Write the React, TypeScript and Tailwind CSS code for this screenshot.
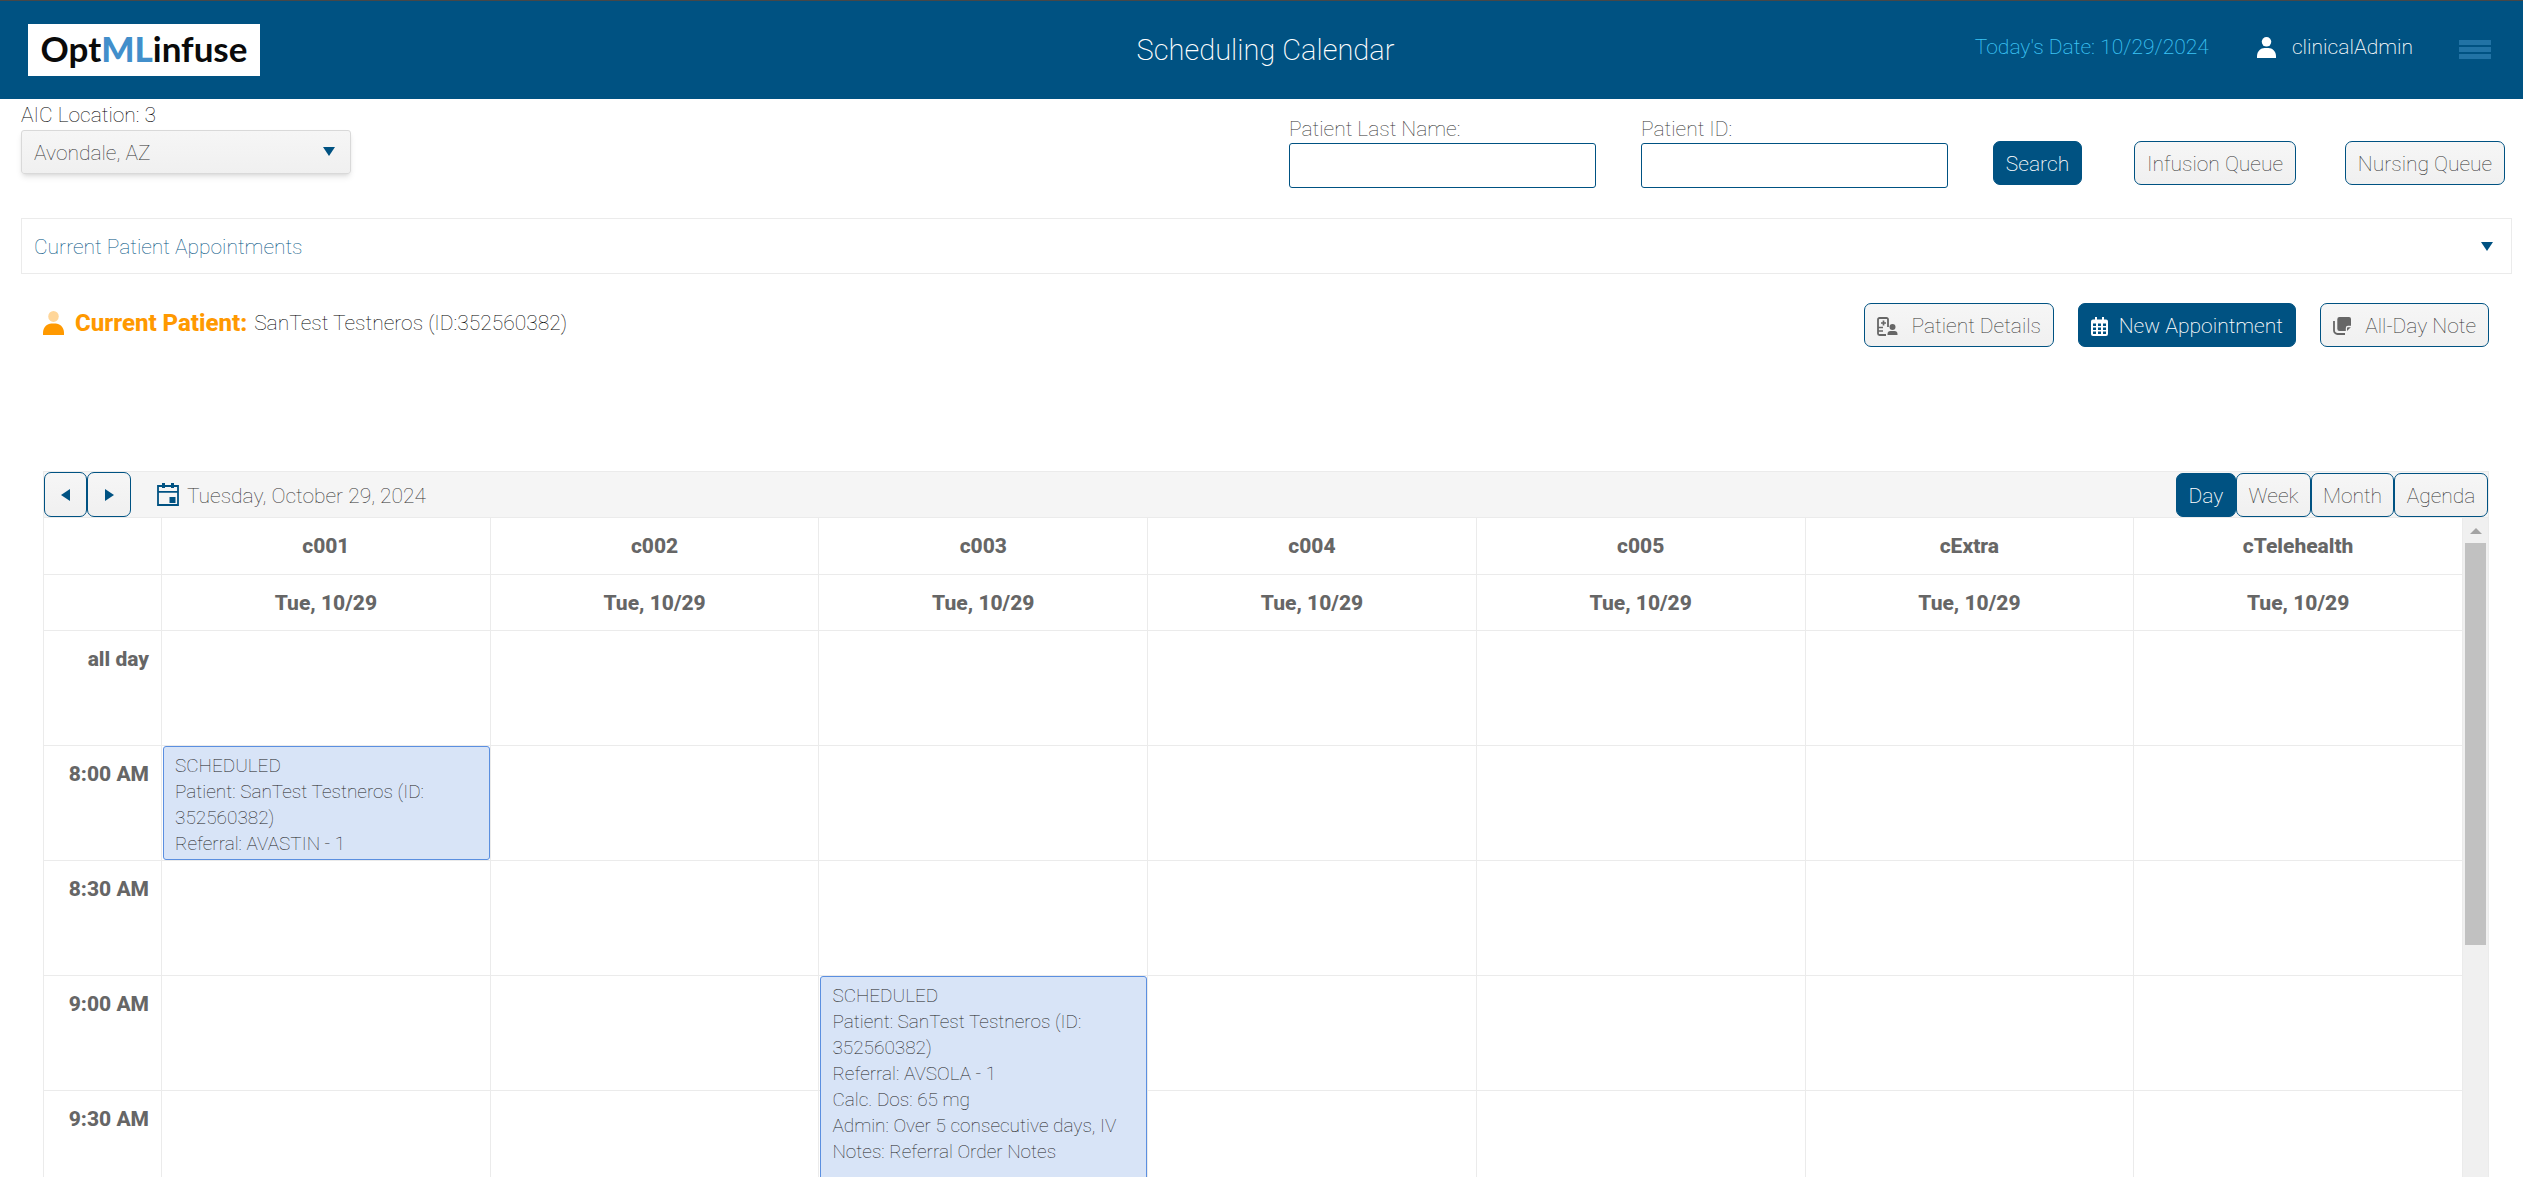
import React from "react";

const ROOMS = ["c001", "c002", "c003", "c004", "c005", "cExtra", "cTelehealth"];
const TIMES = ["8:00 AM", "8:30 AM", "9:00 AM", "9:30 AM"];

type Appointment = { room: string; time: string; lines: string[]; size: string };

const APPOINTMENTS: Appointment[] = [
  {
    room: "c001",
    time: "8:00 AM",
    size: "h-[114px]",
    lines: ["SCHEDULED", "Patient: SanTest Testneros (ID: 352560382)", "Referral: AVASTIN - 1"],
  },
  {
    room: "c003",
    time: "9:00 AM",
    size: "h-[229px]",
    lines: [
      "SCHEDULED",
      "Patient: SanTest Testneros (ID: 352560382)",
      "Referral: AVSOLA - 1",
      "Calc. Dos: 65 mg",
      "Admin: Over 5 consecutive days, IV",
      "Notes: Referral Order Notes",
    ],
  },
];

function UserIcon({ className, head }: { className: string; head?: string }) {
  return (
    <svg viewBox="0 0 20 22" className={className} preserveAspectRatio="none" aria-hidden="true">
      <ellipse cx="10" cy="5" rx="5" ry="5" fill={head ?? "currentColor"} />
      <path d="M0 22v-2c0-5 4-8.500 8-8.500h4c4 0 8 3.500 8 8.500v2z" fill="currentColor" />
    </svg>
  );
}

function DownArrow({ className }: { className: string }) {
  return (
    <svg viewBox="0 0 12 9" className={className} aria-hidden="true">
      <path d="M0 0h12L6 9z" fill="#005282" />
    </svg>
  );
}

function PatientDetailsIcon() {
  return (
    <svg viewBox="0 0 21 19" className="h-[19px] w-[21px]" fill="none" aria-hidden="true">
      <path d="M11 10V2.500a1.500 1.500 0 0 0-1.500-1.500h-7A1.500 1.500 0 0 0 1 2.500v14A1.500 1.500 0 0 0 2.500 18H9" stroke="#666" strokeWidth="1.800" />
      <path d="M6.500 3.500v5M4 6h5M1 10.500h5M1 14h5" stroke="#666" strokeWidth="1.700" />
      <circle cx="15.500" cy="10" r="3" fill="#666" />
      <path d="M10.500 18v-1c0-1.800 1.200-3 3-3h4c1.800 0 3 1.200 3 3v1z" fill="#666" />
    </svg>
  );
}

function CalendarGridIcon() {
  return (
    <svg viewBox="0 0 17 19" className="h-[19px] w-[17px]" aria-hidden="true">
      <path
        fillRule="evenodd"
        fill="#fff"
        d="M4 0h2v2.500h5V0h2v2.500h2a2 2 0 0 1 2 2V17a2 2 0 0 1-2 2H2a2 2 0 0 1-2-2V4.500a2 2 0 0 1 2-2h2zM2 6.500v2.500h3V6.500zM7 6.500v2.500h3V6.500zM12 6.500v2.500h3V6.500zM2 10.500v2.500h3v-2.500zM7 10.500v2.500h3v-2.500zM12 10.500v2.500h3v-2.500zM2 14.500v2.500h3v-2.500zM7 14.500v2.500h3v-2.500zM12 14.500v2.500h3v-2.500z"
      />
    </svg>
  );
}

function NotesIcon() {
  return (
    <svg viewBox="0 0 18 18" className="h-[18px] w-[18px]" aria-hidden="true">
      <path d="M6.500 0H16a2 2 0 0 1 2 2v6.800h-3a2.200 2.200 0 0 0-2.200 2.200v3H6.500a2.200 2.200 0 0 1-2.200-2.200V2.200A2.200 2.200 0 0 1 6.500 0z" fill="#666" />
      <path d="M17.800 10.200 14 13.900v-2.700a1 1 0 0 1 1-1z" fill="#666" />
      <path d="M1 4v9.500A3.500 3.500 0 0 0 4.500 17H12" fill="none" stroke="#666" strokeWidth="1.800" />
    </svg>
  );
}

function CalendarDayIcon() {
  return (
    <svg viewBox="0 0 22 23" className="h-[23px] w-[22px]" aria-hidden="true">
      <path d="M1 3h20v19H1zM1 8.800h20" fill="none" stroke="#005282" strokeWidth="1.800" />
      <path d="M5 0h3v5H5zM14 0h3v5h-3zM12.500 14h6v6h-6z" fill="#005282" />
    </svg>
  );
}

const BUTTON = "flex h-[44px] cursor-pointer items-center rounded-[7px] border border-[#005282] pt-0.5 text-[21px] leading-6 whitespace-nowrap ";
const LIGHT = "bg-linear-to-b from-[#f6f6f6] to-[#f0f0f0] text-[#333] ";
const DARK = "bg-[#005282] font-extralight text-white ";

function Header() {
  return (
    <header className="grid h-[99px] shrink-0 grid-cols-[1fr_auto_1fr] items-center border-t border-[#474747] bg-[#005282] pr-8 pl-7 font-extralight">
      <div className="flex h-[52px] w-[232px] items-center justify-center bg-white pb-1 font-[Lato,sans-serif] text-[35px] leading-none font-bold text-[#0a0a0a]">
        <span>
          Opt<span className="font-black text-[#428fcb]">ML</span>infuse
        </span>
      </div>
      <h1 className="pl-3 text-[29px] leading-9 text-white">Scheduling Calendar</h1>
      <div className="flex items-center justify-end pb-1.5 text-[21px] leading-6">
        <span className="text-[#3cc4f5]">Today's Date: 10/29/2024</span>
        <UserIcon className="ml-12 h-[21px] w-[19px] text-white" />
        <span className="ml-4 text-white">clinicalAdmin</span>
        <button type="button" aria-label="Menu" className="ml-[46px] flex w-8 cursor-pointer flex-col gap-0.5 pt-1">
          <span className="h-[5px] w-full bg-[#2273a5]" />
          <span className="h-[5px] w-full bg-[#2273a5]" />
          <span className="h-[5px] w-full bg-[#2273a5]" />
        </button>
      </div>
    </header>
  );
}

function SearchBar() {
  return (
    <section className="flex items-start justify-between pr-[18px] pl-[21px]">
      <div className="flex flex-col pt-1">
        <label htmlFor="location" className="h-[27px] text-[21px] leading-6 text-black">
          AIC Location: 3
        </label>
        <div className="relative">
          <select
            id="location"
            className="h-[44px] w-[330px] appearance-none rounded-[3px] border border-[#d9d9d9] bg-linear-to-b from-[#f6f6f6] to-[#f0f0f0] px-3 pt-1 text-[21px] text-[#333] shadow-md"
          >
            <option>Avondale, AZ</option>
          </select>
          <DownArrow className="pointer-events-none absolute top-[17px] right-4 h-[9px] w-[12px]" />
        </div>
      </div>
      <form className="flex items-start pt-[18px]" onSubmit={(e) => e.preventDefault()}>
        <div className="flex w-[307px] flex-col">
          <label htmlFor="last-name" className="h-[26px] text-[21px] leading-6 text-[#333]">
            Patient Last Name:
          </label>
          <input id="last-name" className="h-[45px] rounded-[3px] border border-[#005282] px-3 text-[21px]" />
        </div>
        <div className="ml-[45px] flex w-[307px] flex-col">
          <label htmlFor="patient-id" className="h-[26px] text-[21px] leading-6 text-[#333]">
            Patient ID:
          </label>
          <input id="patient-id" className="h-[45px] rounded-[3px] border border-[#005282] px-3 text-[21px]" />
        </div>
        <div className="ml-[45px] flex pt-6">
          <button type="submit" className={BUTTON + DARK + "w-[89px] justify-center"}>Search</button>
          <button type="button" className={BUTTON + LIGHT + "ml-[52px] w-[162px] justify-center"}>Infusion Queue</button>
          <button type="button" className={BUTTON + LIGHT + "ml-[49px] w-[160px] justify-center"}>Nursing Queue</button>
        </div>
      </form>
    </section>
  );
}

function PatientBar() {
  return (
    <section className="mt-[29px] flex items-center justify-between pr-[34px] pl-[43px]">
      <div className="flex items-center pb-1">
        <UserIcon className="h-6 w-[21px] text-[#ff9900]" head="#ffd699" />
        <span className="ml-[11px] text-[24px] leading-7 font-extrabold text-[#ff9900]">Current Patient:</span>
        <span className="ml-[7px] text-[21px] leading-7 text-black">SanTest Testneros (ID:352560382)</span>
      </div>
      <div className="flex gap-6">
        <button type="button" className={BUTTON + LIGHT + "w-[190px] justify-between px-3"}>
          <PatientDetailsIcon />
          Patient Details
        </button>
        <button type="button" className={BUTTON + DARK + "w-[218px] justify-between px-3"}>
          <CalendarGridIcon />
          New Appointment
        </button>
        <button type="button" className={BUTTON + LIGHT + "w-[169px] justify-between px-3"}>
          <NotesIcon />
          All-Day Note
        </button>
      </div>
    </section>
  );
}

const NAV = "flex h-[45px] cursor-pointer items-center justify-center rounded-[7px] border border-[#005282] bg-linear-to-b from-[#f6f6f6] to-[#f0f0f0] ";

function Toolbar() {
  return (
    <div className="flex h-[46px] shrink-0 items-end justify-between border-b border-[#ebebeb] bg-[#f5f5f5]">
      <div className="flex items-center">
        <button type="button" aria-label="Previous day" className={NAV + "w-[43px]"}>
          <svg viewBox="0 0 9 12" className="h-3 w-[9px]"><path d="M9 0v12L0 6z" fill="#005282" /></svg>
        </button>
        <button type="button" aria-label="Next day" className={NAV + "w-[44px]"}>
          <svg viewBox="0 0 9 12" className="h-3 w-[9px]"><path d="M0 0v12l9-6z" fill="#005282" /></svg>
        </button>
        <button type="button" className="ml-[26px] flex cursor-pointer items-center gap-2 text-[21px] leading-6 text-[#333]">
          <CalendarDayIcon />
          <span className="pt-0.5">Tuesday, October 29, 2024</span>
        </button>
      </div>
      <div className="flex">
        <button type="button" className={BUTTON + DARK + "w-[60px] justify-center"}>Day</button>
        <button type="button" className={BUTTON + LIGHT + "w-[75px] justify-center"}>Week</button>
        <button type="button" className={BUTTON + LIGHT + "w-[83px] justify-center"}>Month</button>
        <button type="button" className={BUTTON + LIGHT + "w-[94px] justify-center"}>Agenda</button>
      </div>
    </div>
  );
}

function AppointmentCard({ item }: { item: Appointment }) {
  return (
    <div className={"absolute top-0 right-0 left-px overflow-hidden rounded-[3px] border border-[#5b8fe0] bg-[#d8e4f7] px-[11px] pt-1.5 text-[19px] leading-[26px] text-[#222] " + item.size}>
      {item.lines.map((line) => (
        <p key={line}>{line}</p>
      ))}
    </div>
  );
}

function Scheduler() {
  return (
    <section className="mr-[34px] ml-[43px] mt-[124px] flex min-h-0 flex-1 flex-col border border-b-0 border-[#ebebeb]">
      <Toolbar />
      <div className="flex min-h-0 flex-1">
        <div className="min-w-0 flex-1 overflow-hidden">
          <table className="w-full table-fixed border-separate border-spacing-0 text-[21px] leading-6 text-[#666]">
            <colgroup>
              <col className="w-[118px]" />
              {ROOMS.map((room) => <col key={room} />)}
            </colgroup>
            <thead>
              <tr className="h-[57px]">
                <td className="border-r border-b border-[#ebebeb]" />
                {ROOMS.map((room) => (
                  <th key={room} scope="col" className="border-r border-b border-[#ebebeb] font-extrabold">{room}</th>
                ))}
              </tr>
              <tr className="h-[56px]">
                <td className="border-r border-b border-[#ebebeb]" />
                {ROOMS.map((room) => (
                  <th key={room} scope="col" className="border-r border-b border-[#ebebeb] font-extrabold">Tue, 10/29</th>
                ))}
              </tr>
            </thead>
            <tbody>
              {["all day", ...TIMES].map((time) => (
                <tr key={time} className="h-[115px]">
                  <th scope="row" className="border-r border-b border-[#ebebeb] px-3 pt-4 text-right align-top font-extrabold">{time}</th>
                  {ROOMS.map((room) => {
                    const item = APPOINTMENTS.find((a) => a.room === room && a.time === time);
                    return (
                      <td key={room} className="relative border-r border-b border-[#ebebeb] p-0 font-thin">
                        {item && <AppointmentCard item={item} />}
                      </td>
                    );
                  })}
                </tr>
              ))}
            </tbody>
          </table>
        </div>
        <div className="flex w-[25px] flex-col items-center bg-[#f0f0f0]" aria-hidden="true">
          <svg viewBox="0 0 12 6" className="mt-[10px] mb-[9px] h-[6px] w-[12px]"><path d="M0 6h12L6 0z" fill="#a3a3a3" /></svg>
          <div className="h-[402px] w-[21px] bg-[#c1c1c1]" />
        </div>
      </div>
    </section>
  );
}

export default function App() {
  return (
    <div className="flex h-screen flex-col overflow-hidden bg-white font-[Roboto,sans-serif] font-thin">
      <Header />
      <SearchBar />
      <button
        type="button"
        className="mt-[30px] mr-[11px] ml-[21px] flex h-[56px] shrink-0 cursor-pointer items-center justify-between border border-[#ebebeb] pr-[18px] pl-3 text-[21px] leading-6 text-[#005282]"
      >
        <span className="pt-0.5">Current Patient Appointments</span>
        <DownArrow className="h-[9px] w-[12px]" />
      </button>
      <PatientBar />
      <Scheduler />
    </div>
  );
}
